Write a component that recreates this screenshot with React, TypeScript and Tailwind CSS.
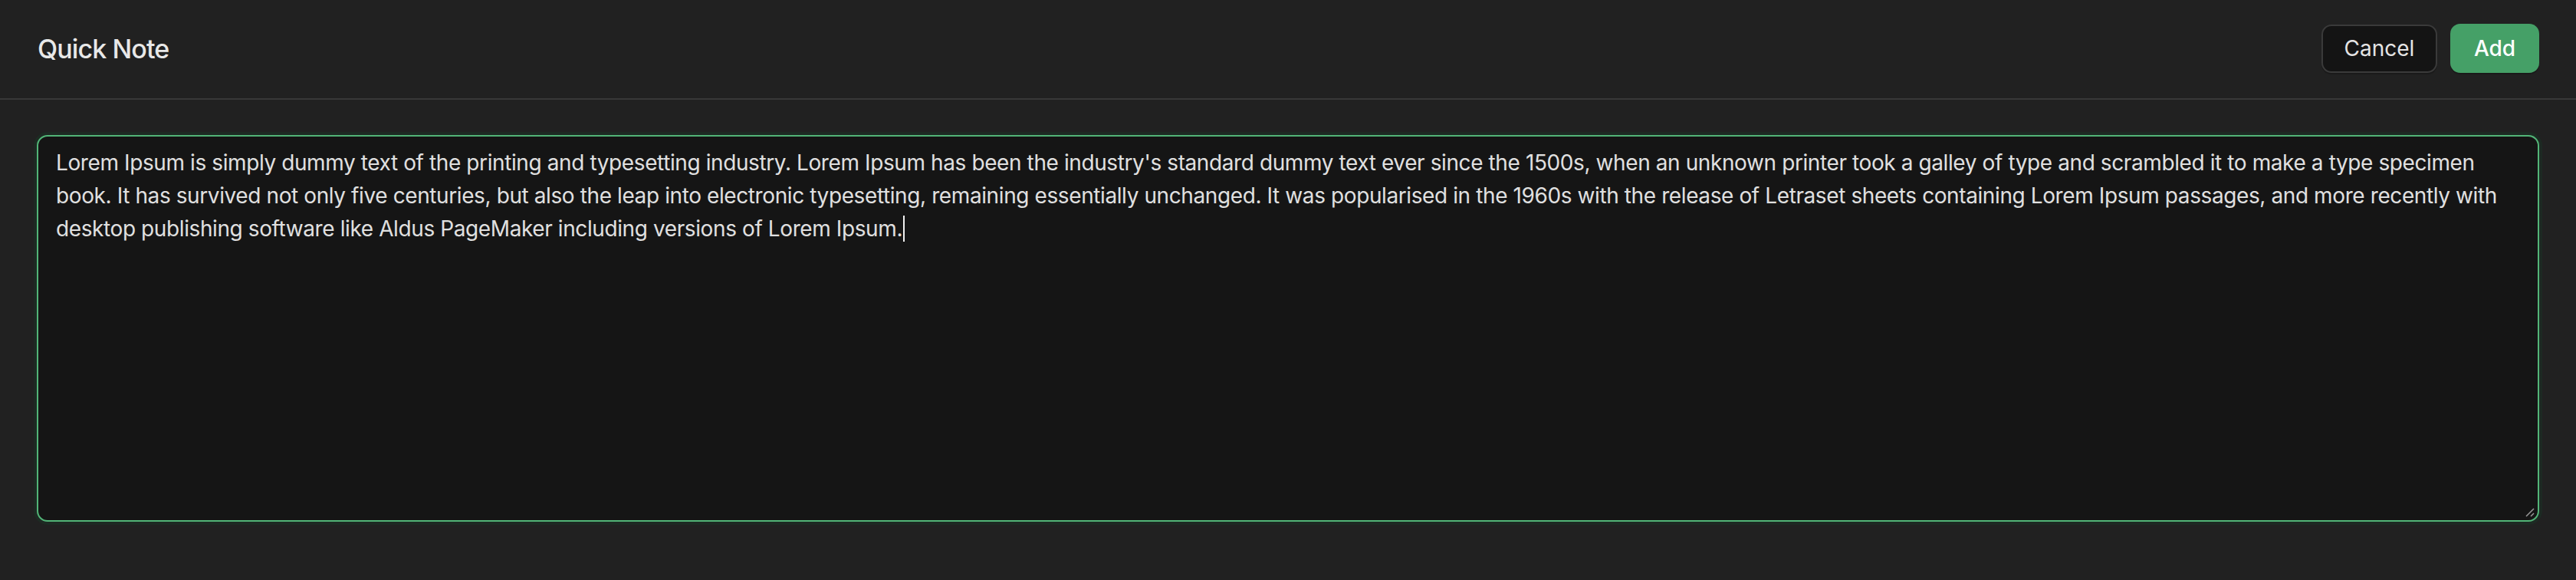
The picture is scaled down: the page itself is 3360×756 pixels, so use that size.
import * as React from "react";

const NOTE =
  "Lorem Ipsum is simply dummy text of the printing and typesetting industry. Lorem Ipsum has been the industry's standard dummy text ever since the 1500s, when an unknown printer took a galley of type and scrambled it to make a type specimen book. It has survived not only five centuries, but also the leap into electronic typesetting, remaining essentially unchanged. It was popularised in the 1960s with the release of Letraset sheets containing Lorem Ipsum passages, and more recently with desktop publishing software like Aldus PageMaker including versions of Lorem Ipsum.";

export default function App() {
  return (
    <div className="min-h-screen bg-[#212121] font-['Inter','Noto_Sans',sans-serif] text-[#e6e6e6]">
      {/* Header */}
      <div className="flex h-[130px] items-center justify-between border-b-2 border-[#383838] pl-[49px] pr-[48px] pb-[2px]">
        <h1 className="text-[34px] font-medium tracking-[-0.9px] text-[#e8e8e8]">
          Quick Note
        </h1>
        <div className="flex items-center gap-[17px]">
          <button className="h-[63px] w-[151px] rounded-[13px] border-2 border-[#3a3a3a] bg-[#141414] text-[28px] text-[#e4e4e4] shadow-[0_2px_0_#1a1a1a]">
            Cancel
          </button>
          <button className="h-[64px] w-[116px] rounded-[13px] bg-[#45a067] text-[28px] font-medium text-white shadow-[0_2px_0_#1a1a1a]">
            Add
          </button>
        </div>
      </div>

      {/* Body */}
      <div className="px-[48px] pt-[46px]">
        <div
          role="textbox"
          aria-multiline="true"
          className="relative h-[504px] w-full rounded-[14px] border-2 border-[#52b477] bg-[#151515] px-[23px] py-[13px] text-[28px] leading-[43px] tracking-[-0.4px] text-[#e0e0e0] shadow-[0_0_0_4px_#1d2a23]"
        >
          {NOTE}
          <span className="ml-px inline-block h-[34px] w-[2px] bg-[#f0f0f0] align-[-7px]" />
          {/* resize grip */}
          <svg
            className="absolute bottom-[3px] right-[3px]"
            width="14"
            height="14"
            viewBox="0 0 14 14"
          >
            <path d="M2 12 L12 2 M8 12 L12 8" stroke="#9a9a9a" strokeWidth="1.5" />
          </svg>
        </div>
      </div>
    </div>
  );
}
